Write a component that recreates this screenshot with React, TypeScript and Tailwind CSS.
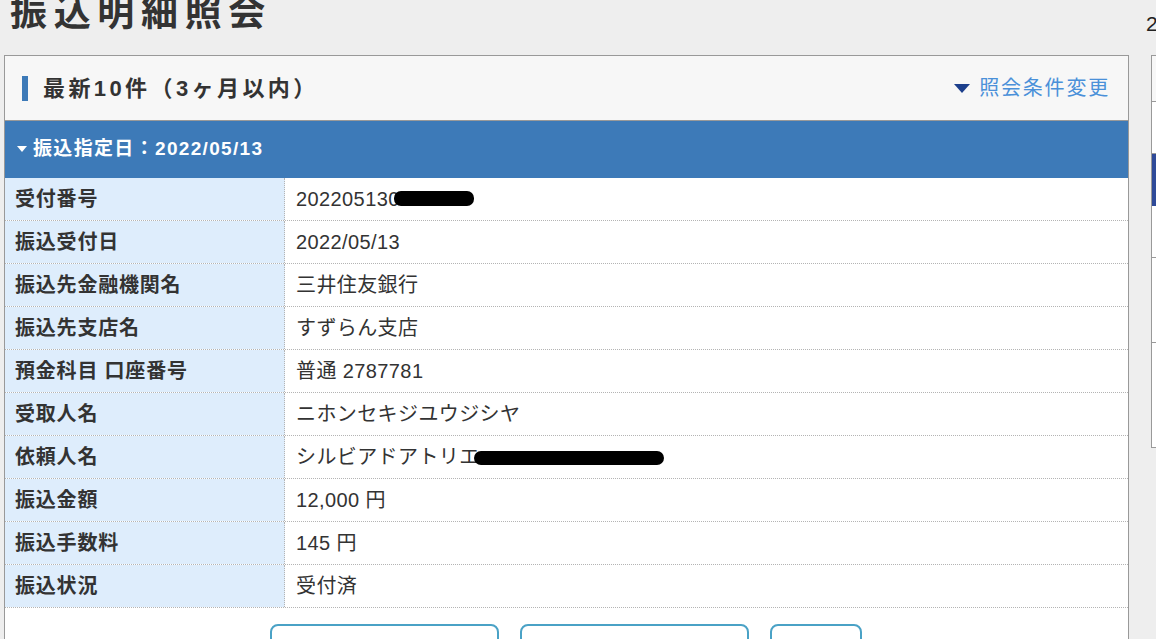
const rows: { label: string; value: React.ReactNode }[] = [
  {
    label: '受付番号',
    value: (
      <span className="inline-flex items-center">
        202205130
        <span className="-ml-[6px] mt-[-2px] inline-block h-[15px] w-[80px] rounded-[7px] bg-black" />
      </span>
    ),
  },
  { label: '振込受付日', value: '2022/05/13' },
  { label: '振込先金融機関名', value: '三井住友銀行' },
  { label: '振込先支店名', value: 'すずらん支店' },
  { label: '預金科目 口座番号', value: '普通 2787781' },
  { label: '受取人名', value: 'ニホンセキジユウジシヤ' },
  {
    label: '依頼人名',
    value: (
      <span className="inline-flex items-center">
        シルビアドアトリエ
        <span className="-ml-[6px] mt-[2px] inline-block h-[14px] w-[190px] rounded-[7px] bg-black" />
      </span>
    ),
  },
  { label: '振込金額', value: '12,000 円' },
  { label: '振込手数料', value: '145 円' },
  { label: '振込状況', value: '受付済' },
];

function DetailRow({ label, value }: { label: string; value: React.ReactNode }) {
  return (
    <div className="grid h-[43px] grid-cols-[280px_1fr] border-b border-dotted border-[#b4b4b4]">
      <div className="flex items-center border-r border-dotted border-[#b4b4b4] bg-[#deedfc] pl-[10px] text-[20px] font-bold tracking-[0.04em] text-[#333]">
        {label}
      </div>
      <div className="flex items-center pl-[11px] text-[20px] tracking-[0.02em] text-[#333]">{value}</div>
    </div>
  );
}

function SidePanel() {
  return (
    <div className="flex w-[60px] shrink-0 flex-col">
      <div className="-ml-[5px] h-[55px] shrink-0 pt-[13px] text-[21px] leading-none text-[#222]">2</div>
      <div className="flex h-[393px] shrink-0 flex-col border border-[#999] bg-white">
        <div className="h-[46px] border-b border-[#999] bg-[#f7f7f7]" />
        <div className="h-[52px] border-b border-[#999]" />
        <div className="h-[52px] bg-[#2f4a98]" />
        <div className="h-[52px] border-b border-[#999]" />
        <div className="h-[85px] border-b border-[#999]" />
        <div className="flex-1" />
      </div>
    </div>
  );
}

export default function App() {
  return (
    <div
      className="flex h-[639px] w-[1156px] overflow-hidden bg-[#eeeeee]"
      style={{ fontFamily: '"Liberation Sans", "Noto Sans CJK JP", sans-serif' }}
    >
      <div className="flex w-[1151px] shrink-0 flex-col pl-[4px]">
        <h1 className="-mt-[5px] h-[60px] shrink-0 pl-[6px] text-[37px] font-bold leading-none tracking-[0.18em] text-[#333]">
          振込明細照会
        </h1>

        <div className="w-[1125px] shrink-0 grow border border-[#999] bg-white">
          <div className="flex h-[65px] items-center justify-between border-b border-[#999] bg-[#f7f7f7] pl-[17px] pr-[18px]">
            <div className="flex items-center gap-[15px]">
              <span className="h-[25px] w-[6px] bg-[#3d7ab8]" />
              <span className="text-[22px] font-bold tracking-[0.155em] text-[#333]">最新10件（3ヶ月以内）</span>
            </div>
            <a className="flex items-center gap-[9px] text-[20px] tracking-[0.09em] text-[#4a90d9]">
              <svg width="16" height="9" viewBox="0 0 16 9">
                <path d="M0 0 H16 L8 9 Z" fill="#1c3f8c" />
              </svg>
              照会条件変更
            </a>
          </div>

          <div className="flex h-[57px] items-center gap-[6px] bg-[#3d7ab8] pl-[12px] text-[19px] font-bold tracking-[0.07em] text-white">
            <svg width="10" height="6" viewBox="0 0 10 6" className="mt-[-2px]">
              <path d="M0 0 H10 L5 6 Z" fill="#fff" />
            </svg>
            振込指定日：2022/05/13
          </div>

          {rows.map((r) => (
            <DetailRow key={r.label} label={r.label} value={r.value} />
          ))}

          <div className="flex gap-[21px] pl-[265px] pt-[16px]">
            <button type="button" className="h-[40px] w-[229px] rounded-[8px] border-2 border-[#4aa2c6] bg-white" />
            <button type="button" className="h-[40px] w-[229px] rounded-[8px] border-2 border-[#4aa2c6] bg-white" />
            <button type="button" className="h-[40px] w-[92px] rounded-[8px] border-2 border-[#4aa2c6] bg-white" />
          </div>
        </div>
      </div>

      <SidePanel />
    </div>
  );
}
